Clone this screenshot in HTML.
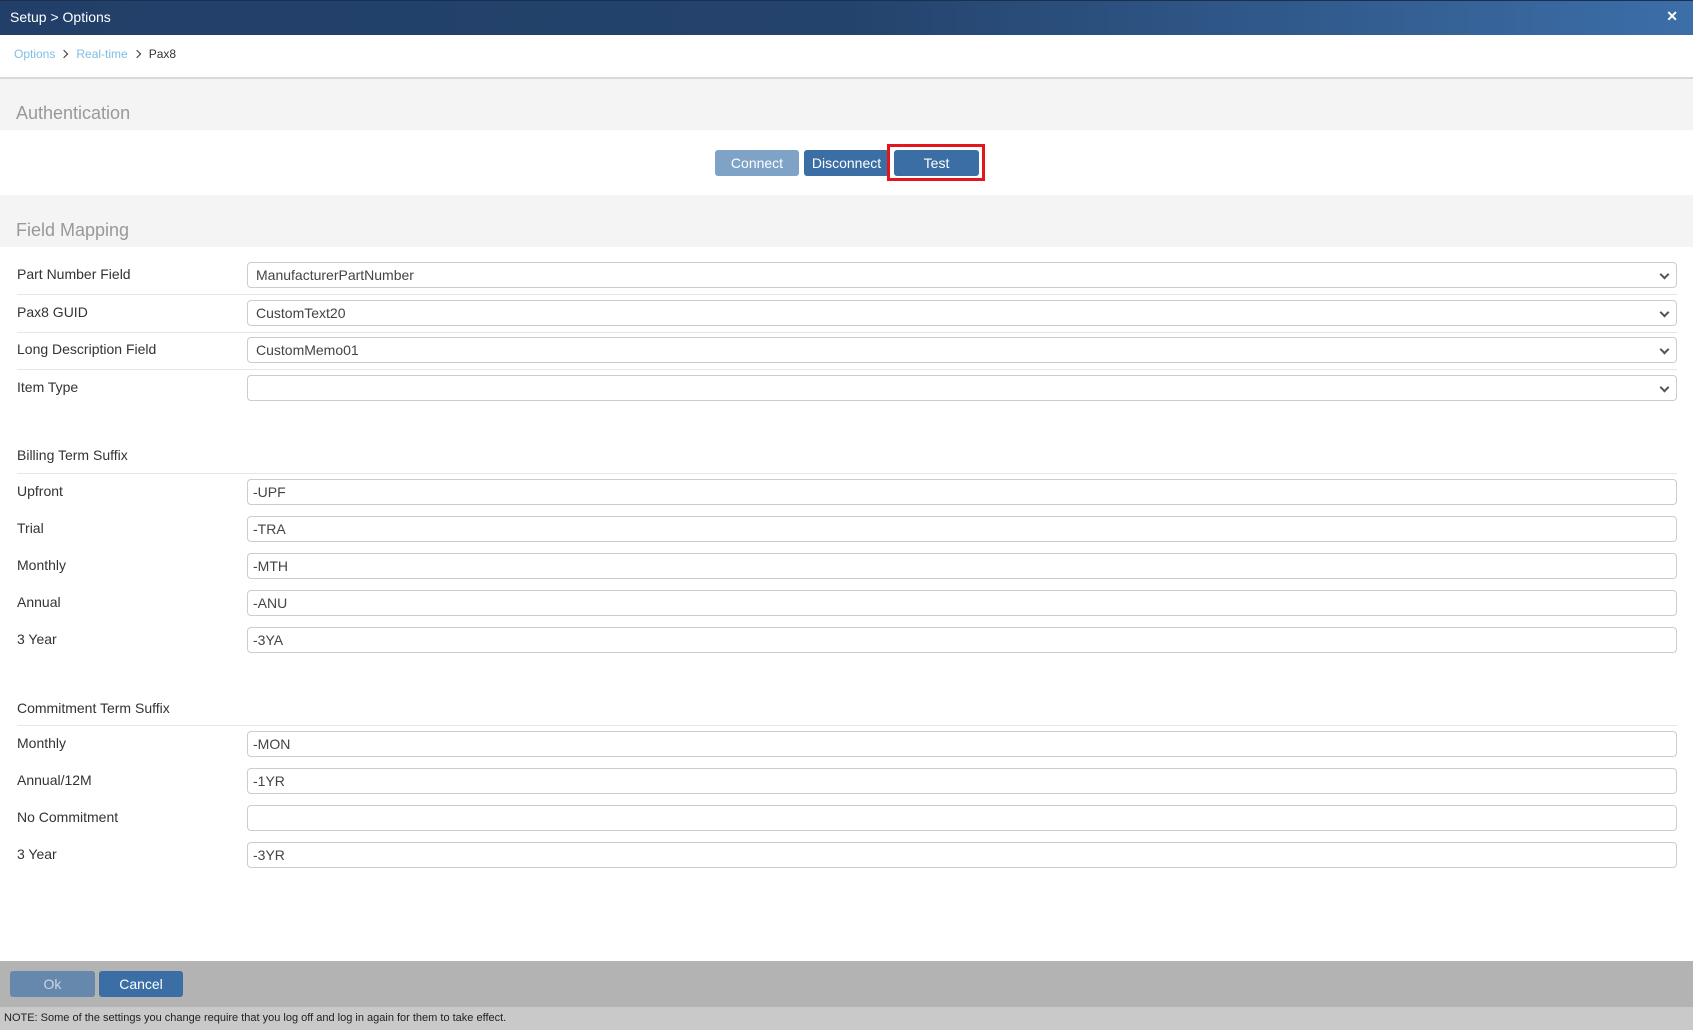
<!DOCTYPE html>
<html><head><style>
*{box-sizing:border-box;margin:0;padding:0}
body{width:1693px;height:1030px;position:relative;background:#fff;font-family:"Liberation Sans",Arial,sans-serif;overflow:hidden;color:#333}
.a{position:absolute}
.hdr{left:0;top:0;width:1693px;height:35px;background:linear-gradient(90deg,#213f68 0%,#24436c 50%,#3c6ea8 100%);border-top:1px solid #1a3050}
.hdr span{position:absolute;left:10px;top:8px;color:#fff;font-size:14px}
.x{right:15px;top:8px;color:#fff;font-size:14px;font-weight:bold}
.bc{top:47px;left:14px;font-size:12px;color:#7fbde6}
.bc b{display:inline-block;width:6px;height:6px;border-right:1.5px solid #333;border-top:1.5px solid #333;transform:rotate(45deg);margin:0 9px 1px 6px}
.sec{left:0;width:1693px;background:#f4f4f4}
.sec span{position:absolute;left:16px;font-size:18px;color:#999}
.btn{height:26px;border-radius:3px;color:#fff;font-size:14px;text-align:center;line-height:26px}
.lbl{left:17px;font-size:14px;color:#333;line-height:22px}
.in{left:247px;width:1430px;height:26px;border:1px solid #ccc;border-radius:4px;font-size:14px;line-height:24px;padding-left:8px;color:#444;background:#fff}
.line{left:17px;width:1660px;height:1px;background:#e6e6e6}
.chev{position:absolute;right:8px;top:8px;width:7px;height:7px;border-right:2px solid #555;border-bottom:2px solid #555;transform:rotate(45deg)}
</style></head><body>
<div class="a hdr"><span>Setup &gt; Options</span></div>
<div class="a x">✕</div>
<div class="a bc">Options<b></b>Real-time<b></b><span style="color:#333">Pax8</span></div>
<div class="a" style="left:0;top:77px;width:1693px;height:2px;background:#d8d8d8"></div>
<div class="a sec" style="top:79px;height:51px"><span style="top:24px">Authentication</span></div>
<div class="a btn" style="left:715px;top:150px;width:84px;background:#7fa2c7">Connect</div>
<div class="a btn" style="left:804px;top:150px;width:85px;background:#3a6ea5">Disconnect</div>
<div class="a" style="left:887px;top:144px;width:98px;height:37px;border:3px solid #e4161d"></div>
<div class="a btn" style="left:894px;top:150px;width:85px;background:#3a6ea5">Test</div>
<div class="a sec" style="top:195px;height:52px"><span style="top:25px">Field Mapping</span></div>

<div class="a lbl" style="top:263px">Part Number Field</div>
<div class="a in" style="top:262px">ManufacturerPartNumber<i class="chev"></i></div>
<div class="a line" style="top:294px"></div>
<div class="a lbl" style="top:301px">Pax8 GUID</div>
<div class="a in" style="top:300px">CustomText20<i class="chev"></i></div>
<div class="a line" style="top:332px"></div>
<div class="a lbl" style="top:338px">Long Description Field</div>
<div class="a in" style="top:337px">CustomMemo01<i class="chev"></i></div>
<div class="a line" style="top:369px"></div>
<div class="a lbl" style="top:376px">Item Type</div>
<div class="a in" style="top:375px"><i class="chev"></i></div>

<div class="a lbl" style="top:444px">Billing Term Suffix</div>
<div class="a line" style="top:473px"></div>
<div class="a lbl" style="top:480px">Upfront</div><div class="a in" style="top:479px;padding-left:5px">-UPF</div>
<div class="a lbl" style="top:517px">Trial</div><div class="a in" style="top:516px;padding-left:5px">-TRA</div>
<div class="a lbl" style="top:554px">Monthly</div><div class="a in" style="top:553px;padding-left:5px">-MTH</div>
<div class="a lbl" style="top:591px">Annual</div><div class="a in" style="top:590px;padding-left:5px">-ANU</div>
<div class="a lbl" style="top:628px">3 Year</div><div class="a in" style="top:627px;padding-left:5px">-3YA</div>

<div class="a lbl" style="top:697px">Commitment Term Suffix</div>
<div class="a line" style="top:725px"></div>
<div class="a lbl" style="top:732px">Monthly</div><div class="a in" style="top:731px;padding-left:5px">-MON</div>
<div class="a lbl" style="top:769px">Annual/12M</div><div class="a in" style="top:768px;padding-left:5px">-1YR</div>
<div class="a lbl" style="top:806px">No Commitment</div><div class="a in" style="top:805px"></div>
<div class="a lbl" style="top:843px">3 Year</div><div class="a in" style="top:842px;padding-left:5px">-3YR</div>

<div class="a" style="left:0;top:961px;width:1693px;height:46px;background:#b3b3b3"></div>
<div class="a btn" style="left:10px;top:971px;width:85px;background:#6688ad;color:#ccd6e2">Ok</div>
<div class="a btn" style="left:99px;top:971px;width:84px;background:#3a6ea5">Cancel</div>
<div class="a" style="left:0;top:1007px;width:1693px;height:23px;background:#c9c9c9;font-size:11px;line-height:23px;padding-left:4px;color:#222">NOTE: Some of the settings you change require that you log off and log in again for them to take effect.</div>
</body></html>
